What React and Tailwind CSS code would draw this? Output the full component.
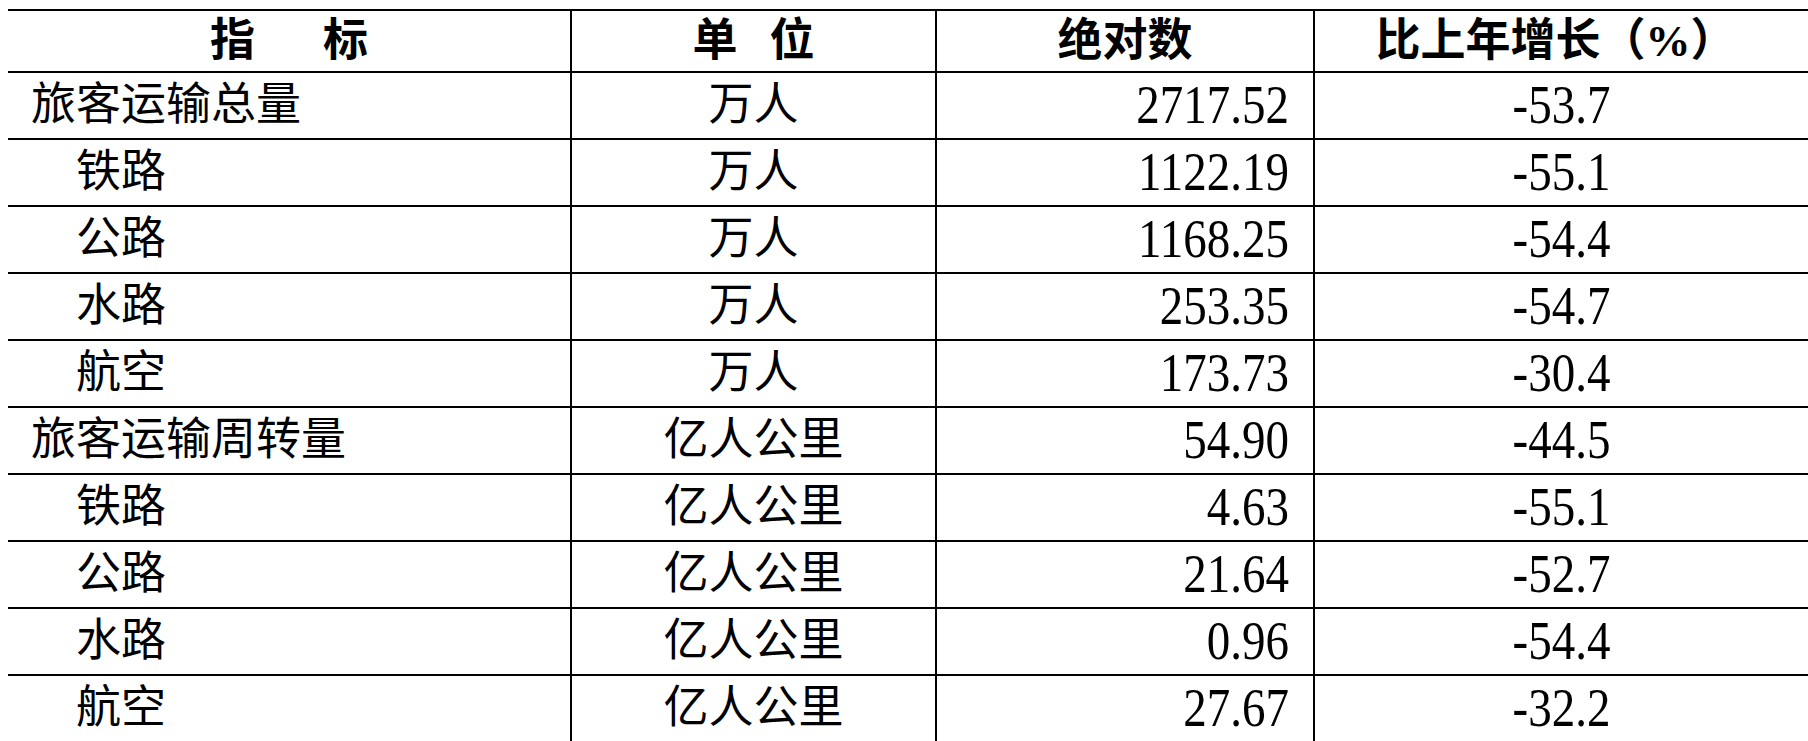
import React from 'react';

const rows = [
  ['旅客运输总量', '万人', '2717.52', '-53.7', false],
  ['铁路', '万人', '1122.19', '-55.1', true],
  ['公路', '万人', '1168.25', '-54.4', true],
  ['水路', '万人', '253.35', '-54.7', true],
  ['航空', '万人', '173.73', '-30.4', true],
  ['旅客运输周转量', '亿人公里', '54.90', '-44.5', false],
  ['铁路', '亿人公里', '4.63', '-55.1', true],
  ['公路', '亿人公里', '21.64', '-52.7', true],
  ['水路', '亿人公里', '0.96', '-54.4', true],
  ['航空', '亿人公里', '27.67', '-32.2', true],
];

export default function App() {
  return (
    <div className="w-full h-[741px] overflow-hidden bg-white text-black font-['Liberation_Serif','Noto_Sans_CJK_SC',serif]">
      <table className="ml-2 mt-[9px] w-[1800px] table-fixed border-collapse">
        <colgroup>
          <col className="w-[563px]" />
          <col className="w-[365px]" />
          <col className="w-[378px]" />
          <col className="w-[494px]" />
        </colgroup>
        <thead>
          <tr className="h-[62px] text-[45px] font-bold leading-none">
            <th className="border-y-2 border-r-2 border-black p-0">
              <div className="flex justify-center gap-[68px]">
                <span>指</span>
                <span>标</span>
              </div>
            </th>
            <th className="border-y-2 border-r-2 border-black p-0">
              <div className="flex justify-center gap-[32px]">
                <span>单</span>
                <span>位</span>
              </div>
            </th>
            <th className="border-y-2 border-r-2 border-black p-0">绝对数</th>
            <th className="border-y-2 border-black p-0 pr-3">比上年增长（%）</th>
          </tr>
        </thead>
        <tbody>
          {rows.map(([name, unit, value, growth, sub], i) => (
            <tr key={i} className="h-[67px] leading-none">
              <td className={`border-y-2 border-r-2 border-black p-0 text-[45px] ${sub ? 'pl-[68px]' : 'pl-[23px]'}`}>
                {name}
              </td>
              <td className="border-y-2 border-r-2 border-black p-0 text-center text-[45px]">{unit}</td>
              <td className="border-y-2 border-r-2 border-black p-0 pr-[24px] text-right text-[47px]">
                <span className="inline-block scale-y-[1.15]">{value}</span>
              </td>
              <td className="border-y-2 border-black p-0 text-center text-[47px]">
                <span className="inline-block scale-y-[1.15]">{growth}</span>
              </td>
            </tr>
          ))}
        </tbody>
      </table>
    </div>
  );
}
